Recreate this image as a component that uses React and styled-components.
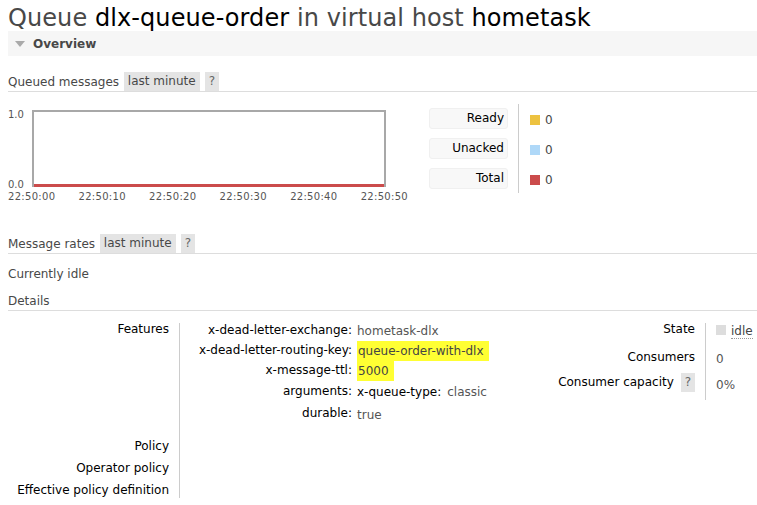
import React from 'react';
import styled, { createGlobalStyle } from 'styled-components';

const GlobalStyle = createGlobalStyle`
  html, body {
    margin: 0;
    padding: 0;
    background: #fff;
  }
  *, *::before, *::after {
    box-sizing: border-box;
  }
  body {
    font-family: Verdana, "DejaVu Sans", sans-serif;
    font-size: 12px;
    color: #484848;
  }
`;

const times = ['22:50:00', '22:50:10', '22:50:20', '22:50:30', '22:50:40', '22:50:50'];

const legend = [
  { label: 'Ready', color: '#edc240' },
  { label: 'Unacked', color: '#afd8f8' },
  { label: 'Total', color: '#cb4b4b' },
];

function App() {
  return (
    <Page>
      <GlobalStyle />
      <Title>
        Queue <Strong>dlx-queue-order</Strong> in virtual host <Strong>hometask</Strong>
      </Title>
      <SectionBar>
        <Triangle />
        Overview
      </SectionBar>

      <SubHeading $top={16}>
        Queued messages <Pill>last minute</Pill>
        <Help>?</Help>
      </SubHeading>

      <ChartRow>
        <ChartWrap>
          <Axis>
            <span>1.0</span>
            <span>0.0</span>
          </Axis>
          <Plot>
            <Line />
          </Plot>
          <Ticks>
            {times.map((t) => (
              <span key={t}>{t}</span>
            ))}
          </Ticks>
        </ChartWrap>
        <Legend>
          <LegendLabels>
            {legend.map((l) => (
              <LegendLabel key={l.label}>{l.label}</LegendLabel>
            ))}
          </LegendLabels>
          <LegendValues>
            {legend.map((l) => (
              <LegendValue key={l.label}>
                <Swatch $color={l.color} />0
              </LegendValue>
            ))}
          </LegendValues>
        </Legend>
      </ChartRow>

      <SubHeading $top={30}>
        Message rates <Pill>last minute</Pill>
        <Help>?</Help>
      </SubHeading>
      <Plain>Currently idle</Plain>
      <SubHeading $top={7}>Details</SubHeading>

      <Details>
        <LeftTable>
          <Th $pt={0}>Features</Th>
          <Td>
            <Args>
              <Key>x-dead-letter-exchange:</Key>
              <Val>hometask-dlx</Val>
              <Key>x-dead-letter-routing-key:</Key>
              <Val>
                <Mark>queue-order-with-dlx</Mark>
              </Val>
              <Key>x-message-ttl:</Key>
              <Val>
                <Mark>5000</Mark>
              </Val>
              <Key $tall>arguments:</Key>
              <Val $tall>
                <Inner>
                  <span>x-queue-type:</span>
                  <Boxed>classic</Boxed>
                </Inner>
              </Val>
              <Key $tall>durable:</Key>
              <Val $tall>
                <Boxed>true</Boxed>
              </Val>
            </Args>
          </Td>
          <Th $pt={16}>Policy</Th>
          <Td />
          <Th $pt={5}>Operator policy</Th>
          <Td />
          <Th $pt={5} $pb={2}>
            Effective policy definition
          </Th>
          <Td />
        </LeftTable>

        <RightTable>
          <RTh $pt={0} $h={20}>
            State
          </RTh>
          <RTd $pt={1} $h={20}>
            <StateDot />
            <Abbr>idle</Abbr>
          </RTd>
          <RTh $pt={8} $h={26}>
            Consumers
          </RTh>
          <RTd $pt={10} $h={26}>
            0
          </RTd>
          <RTh $pt={7} $h={31}>
            Consumer capacity <Help $small>?</Help>
          </RTh>
          <RTd $pt={10} $h={31}>
            0%
          </RTd>
        </RightTable>
      </Details>
    </Page>
  );
}

export default App;

const Page = styled.div`
  padding-left: 8px;
  width: 757px;
  height: 505px;
  overflow: hidden;
`;

const Title = styled.h1`
  margin: 0;
  height: 31px;
  font-size: 24px;
  font-weight: normal;
  line-height: 36px;
  letter-spacing: 0.08px;
  color: #484848;
  white-space: nowrap;
`;

const Strong = styled.span`
  color: #000;
`;

const SectionBar = styled.div`
  height: 25px;
  background: #f6f6f6;
  display: flex;
  align-items: center;
  gap: 8px;
  padding-left: 7px;
  font-weight: bold;
  color: #484848;
`;

const Triangle = styled.span`
  width: 0;
  height: 0;
  border-left: 5px solid transparent;
  border-right: 5px solid transparent;
  border-top: 6px solid #aaa;
`;

const SubHeading = styled.div`
  margin-top: ${(p) => p.$top}px;
  height: 20px;
  display: flex;
  align-items: center;
  border-bottom: 1px solid #ddd;
  color: #484848;
  white-space: pre;
`;

const Pill = styled.span`
  background: #e4e4e4;
  height: 19px;
  line-height: 19px;
  padding: 0 4px;
  margin-left: 1px;
`;

const Help = styled.span`
  background: #e4e4e4;
  height: 19px;
  line-height: 19px;
  padding: 0 4px;
  margin-left: ${(p) => (p.$small ? 3 : 5)}px;
  color: #666;
`;

const ChartRow = styled.div`
  display: flex;
  margin-top: 16px;
  height: 96px;
`;

const ChartWrap = styled.div`
  display: grid;
  grid-template-columns: 24px 354px;
  grid-template-rows: 77px auto;
  width: 421px;
  padding-top: 2px;
`;

const Axis = styled.div`
  display: flex;
  flex-direction: column;
  justify-content: space-between;
  font-size: 10px;
  color: #545454;
  line-height: 10px;
  margin-bottom: -3px;
`;

const Plot = styled.div`
  border: 2px solid #a8a8a8;
  border-bottom: none;
  display: flex;
  align-items: flex-end;
`;

const Line = styled.div`
  height: 3px;
  width: 100%;
  background: #cb4b4b;
`;

const Ticks = styled.div`
  grid-column: 1 / 3;
  display: flex;
  justify-content: space-between;
  width: 400px;
  font-size: 10px;
  color: #545454;
  margin-top: 4px;
  letter-spacing: 0.3px;
`;

const Legend = styled.div`
  display: flex;
  margin-top: -4px;
  height: 89px;
`;

const LegendLabels = styled.div`
  display: flex;
  flex-direction: column;
  gap: 9px;
  padding-top: 4px;
  padding-right: 10px;
  border-right: 1px solid #ccc;
`;

const LegendLabel = styled.div`
  width: 79px;
  height: 21px;
  line-height: 19px;
  padding-right: 3px;
  text-align: right;
  background: #f8f8f8;
  border: 1px solid #f0f0f0;
  border-radius: 3px;
  color: #000;
`;

const LegendValues = styled.div`
  display: flex;
  flex-direction: column;
  gap: 9px;
  padding-top: 5px;
  padding-left: 11px;
`;

const LegendValue = styled.div`
  height: 21px;
  display: flex;
  align-items: center;
  gap: 5px;
  color: #484848;
`;

const Swatch = styled.span`
  width: 10px;
  height: 10px;
  background: ${(p) => p.$color};
`;

const Plain = styled.div`
  margin-top: 10px;
  height: 20px;
  line-height: 20px;
`;

const Details = styled.div`
  display: flex;
  justify-content: space-between;
  margin-top: 12px;
`;

const LeftTable = styled.div`
  display: grid;
  grid-template-columns: 171px auto;
  grid-auto-rows: min-content;
`;

const Th = styled.div`
  text-align: right;
  padding: ${(p) => p.$pt}px 10px ${(p) => (p.$pb ?? 5)}px 0;
  color: #000;
  line-height: 12px;
  white-space: nowrap;
`;

const Td = styled.div`
  border-left: 1px solid #ccc;
`;

const Args = styled.div`
  display: grid;
  grid-template-columns: 177px auto;
  margin-top: -3px;
`;

const Key = styled.div`
  text-align: right;
  color: #000;
  padding-right: 5px;
  height: ${(p) => (p.$tall ? 22 : 20)}px;
  line-height: ${(p) => (p.$tall ? 22 : 20)}px;
  white-space: nowrap;
`;

const Val = styled.div`
  height: ${(p) => (p.$tall ? 22 : 20)}px;
  line-height: ${(p) => (p.$tall ? 24 : 22)}px;
  color: #555;
  white-space: nowrap;
`;

const Mark = styled.span`
  background: #ffff33;
  padding: 3px 5px 3px 1px;
  color: #444;
`;

const Inner = styled.span`
  display: inline-flex;
  gap: 6px;
  color: #000;
  span {
    line-height: 20px;
  }
`;

const Boxed = styled.span`
  color: #555;
  line-height: 26px;
`;

const RightTable = styled.div`
  display: grid;
  grid-template-columns: auto 52px;
  grid-auto-rows: min-content;
  align-self: flex-start;
`;

const RTh = styled.div`
  height: ${(p) => p.$h}px;
  padding: ${(p) => p.$pt}px 10px 0 0;
  color: #000;
  display: flex;
  justify-content: flex-end;
  align-items: flex-start;
  line-height: 12px;
  white-space: pre;
  & > span {
    margin-top: -3px;
  }
`;

const RTd = styled.div`
  height: ${(p) => p.$h}px;
  border-left: 1px solid #ccc;
  padding: ${(p) => p.$pt}px 0 0 10px;
  display: flex;
  align-items: flex-start;
  gap: 5px;
  color: #555;
  line-height: 12px;
`;

const StateDot = styled.span`
  width: 10px;
  height: 10px;
  background: #ddd;
  margin-top: 1px;
`;

const Abbr = styled.span`
  border-bottom: 1px dotted #999;
  color: #444;
  line-height: 14px;
`;
